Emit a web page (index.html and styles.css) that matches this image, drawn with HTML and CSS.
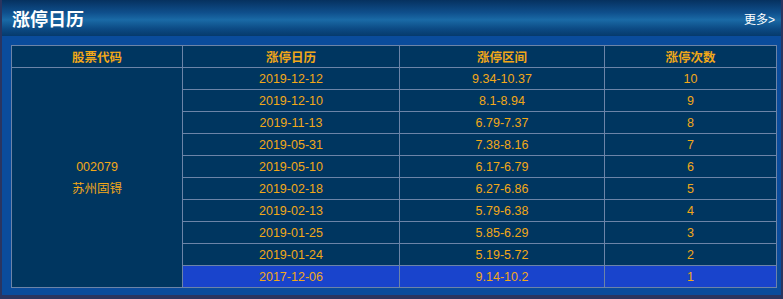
FILE: index.html
```html
<!doctype html>
<html lang="zh-CN">
<head>
    <meta charset="UTF-8">
    <title>涨停日历</title>
    <link rel="stylesheet" href="styles.css">
</head>
<body>

<div class="box">
    <div class="box_head">
        <h2>涨停日历</h2>
        <a class="more" href="#">更多&gt;</a>
    </div>
    <div class="box_body">
        <table class="zt_table">
            <colgroup>
                <col class="c1">
                <col class="c2">
                <col class="c3">
                <col class="c4">
            </colgroup>
            <tr>
                <th>股票代码</th>
                <th>涨停日历</th>
                <th>涨停区间</th>
                <th>涨停次数</th>
            </tr>
            <tr>
                <td rowspan="10" class="stock">002079<br>苏州固锝</td>
                <td>2019-12-12</td><td>9.34-10.37</td><td>10</td>
            </tr>
            <tr><td>2019-12-10</td><td>8.1-8.94</td><td>9</td></tr>
            <tr><td>2019-11-13</td><td>6.79-7.37</td><td>8</td></tr>
            <tr><td>2019-05-31</td><td>7.38-8.16</td><td>7</td></tr>
            <tr><td>2019-05-10</td><td>6.17-6.79</td><td>6</td></tr>
            <tr><td>2019-02-18</td><td>6.27-6.86</td><td>5</td></tr>
            <tr><td>2019-02-13</td><td>5.79-6.38</td><td>4</td></tr>
            <tr><td>2019-01-25</td><td>5.85-6.29</td><td>3</td></tr>
            <tr><td>2019-01-24</td><td>5.19-5.72</td><td>2</td></tr>
            <tr class="active"><td>2017-12-06</td><td>9.14-10.2</td><td>1</td></tr>
        </table>
    </div>
</div>

</body>
</html>
```

FILE: styles.css
```css
body {
    margin: 0;
    background: #2a3560;
    font-family: "Liberation Sans", "Noto Sans CJK SC", sans-serif;
}

.box {
    width: 779px;
    height: 295px;
    margin: 0 2px;
    background-color: #0a4c9c;
}

.box_head {
    height: 36px;
    display: flex;
    align-items: center;
    justify-content: space-between;
    padding: 0 6px 0 10px;
    background: linear-gradient(to bottom, #06315f 0%, #0f4f8c 35%, #1a6aa6 55%, #0c4a84 80%, #063a6c 100%);
}

.box_head h2 {
    margin: 0;
    color: #fff;
    font-size: 18px;
    font-weight: bold;
}

.more {
    color: #fff;
    font-size: 12px;
    text-decoration: none;
}

.box_body {
    padding: 9px 0 0 9px;
}

.zt_table {
    border-collapse: collapse;
    table-layout: fixed;
    width: 766px;
    color: #f2a818;
    font-size: 12.5px;
    text-align: center;
}

.c1 { width: 171px; }
.c2 { width: 217px; }
.c3 { width: 205px; }
.c4 { width: 172px; }

.zt_table th,
.zt_table td {
    height: 21px;
    padding: 0;
    border: 1px solid #6c84a8;
    background-color: #003660;
}

.zt_table th {
    font-weight: bold;
}

.zt_table .stock {
    line-height: 22px;
}

.zt_table .active td {
    background-color: #1944cc;
}
```
